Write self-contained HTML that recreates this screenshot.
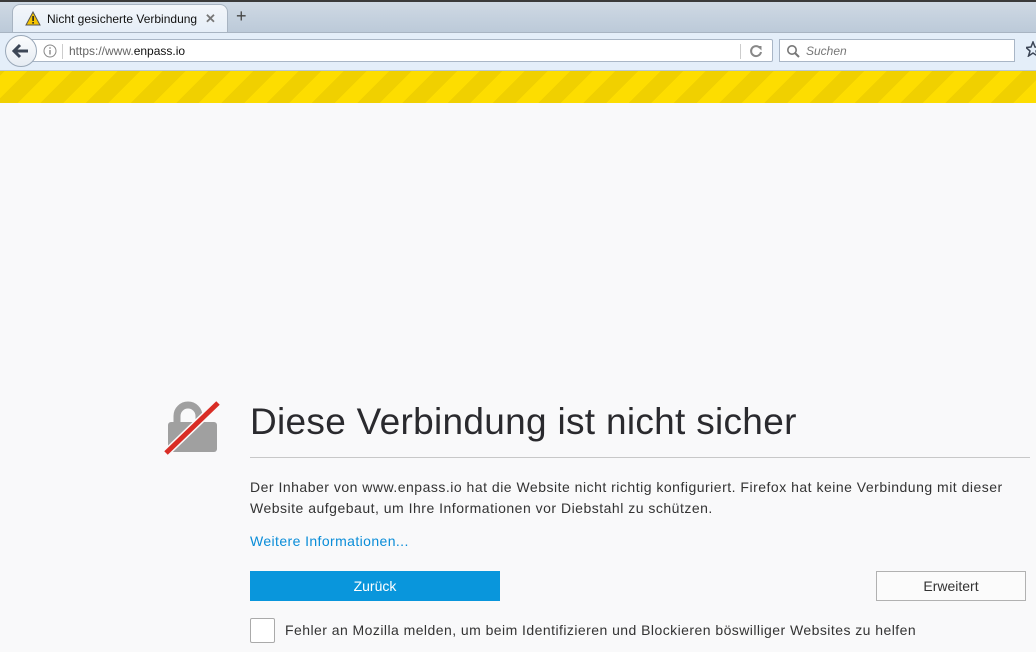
<!DOCTYPE html>
<html><head><style>
*{margin:0;padding:0;box-sizing:border-box}
body{width:1036px;height:652px;overflow:hidden;background:#f9f9fa;font-family:"Liberation Sans",sans-serif;position:relative}
.tabbar{position:absolute;left:0;top:0;width:1036px;height:32px;background:linear-gradient(#cfd9e4,#bccad9);border-top:2px solid #3a3a3a}
.tab{position:absolute;left:12px;top:2px;width:216px;height:30px;background:linear-gradient(#f3f6fa,#e4edf7);border:1px solid #a8b4c2;border-bottom:none;border-radius:8px 8px 0 0}
.tab span{position:absolute;left:34px;top:7px;font-size:12px;color:#111}
.tab .x{position:absolute;left:192px;top:6px;font-size:13px;color:#777;font-weight:bold}
.plus{position:absolute;left:236px;top:4px;font-size:18px;color:#444}
.nav{position:absolute;left:0;top:32px;width:1036px;height:39px;background:#e4eef9;border-top:1px solid #a8b4c2;border-bottom:1px solid #b8c6d6}
.url{position:absolute;left:30px;top:6px;width:743px;height:23px;background:#fff;border:1px solid #a9b6c6;border-radius:0 2px 2px 0}
.url span{position:absolute;left:38px;top:4px;font-size:12px;color:#666}
.back{position:absolute;left:5px;top:2px;width:32px;height:32px;border-radius:50%;background:linear-gradient(#fbfcfd,#e6ecf3);border:1px solid #9aa8b8}
.search{position:absolute;left:779px;top:6px;width:236px;height:23px;background:#fff;border:1px solid #a9b6c6}
.search span{position:absolute;left:26px;top:4px;font-size:12px;color:#777;font-style:italic}
.stripe{position:absolute;left:0;top:71px;width:1036px;height:32px;background:repeating-linear-gradient(-45deg,#fddd00 0 16px,#f0d000 16px 32px)}
h1{position:absolute;left:250px;top:401px;font-weight:normal;font-size:37px;color:#2a2a2e;letter-spacing:0.3px}
.hr{position:absolute;left:250px;top:457px;width:780px;height:1px;background:#c8c8c8}
p{position:absolute;left:250px;top:477px;width:760px;font-size:14px;line-height:21px;color:#333;letter-spacing:0.5px}
a{position:absolute;left:250px;top:533px;font-size:14px;color:#0a8dd8;letter-spacing:0.4px}
.b1{position:absolute;left:250px;top:571px;width:250px;height:30px;background:#0996dc;color:#fff;font-size:14px;text-align:center;line-height:30px}
.b2{position:absolute;left:876px;top:571px;width:150px;height:30px;background:#fbfbfb;border:1px solid #b1b1b1;color:#333;font-size:14px;text-align:center;line-height:28px}
.cb{position:absolute;left:250px;top:618px;width:25px;height:25px;border:1px solid #aaa;background:#fff;border-radius:2px}
.cbl{position:absolute;left:285px;top:622px;font-size:14px;color:#333;letter-spacing:0.45px}
</style></head><body>
<div class="tabbar">
<div class="tab">
<svg style="position:absolute;left:12px;top:6px" width="16" height="15"><path d="M8 1 L15 14 H1 Z" fill="#f5c400" stroke="#555" stroke-width="1"/><rect x="7.3" y="5" width="1.6" height="5" fill="#222"/><rect x="7.3" y="11" width="1.6" height="1.6" fill="#222"/></svg>
<span>Nicht gesicherte Verbindung</span><span class="x">✕</span></div>
<div class="plus">+</div>
</div>
<div class="nav">
<div class="url">
<svg style="position:absolute;left:12px;top:4px" width="14" height="14"><circle cx="7" cy="7" r="6" fill="none" stroke="#888"/><rect x="6.3" y="6" width="1.4" height="4.5" fill="#888"/><rect x="6.3" y="3.3" width="1.4" height="1.4" fill="#888"/></svg>
<div style="position:absolute;left:31px;top:4px;width:1px;height:15px;background:#ccc"></div>
<span>https://www.<span style="position:static;color:#111">enpass.io</span></span>
<div style="position:absolute;left:709px;top:4px;width:1px;height:15px;background:#ccc"></div>
<svg style="position:absolute;left:718px;top:4px" width="14" height="14"><path d="M11 4 A5 5 0 1 0 12 8" fill="none" stroke="#888" stroke-width="2"/><path d="M8 2 L12.5 2 L12.5 6.5 Z" fill="#888"/></svg>
</div>
<div class="back"><svg width="30" height="30"><path d="M8 15 H22 M14 9 L8 15 L14 21" stroke="#3c4656" stroke-width="3" fill="none"/></svg></div>
<div class="search"><svg style="position:absolute;left:6px;top:4px" width="14" height="14"><circle cx="6" cy="6" r="4.2" fill="none" stroke="#777" stroke-width="1.6"/><path d="M9 9 L13 13" stroke="#777" stroke-width="2"/></svg><span>Suchen</span></div>
<svg style="position:absolute;left:1026px;top:8px" width="14" height="16"><path d="M7 1 L9 6 L14 6.5 L10 10 L11.5 15 L7 12 L2.5 15 L4 10 L0 6.5 L5 6 Z" fill="none" stroke="#3c4656" stroke-width="1.5"/></svg>
</div>
<div class="stripe"></div>
<svg style="position:absolute;left:164px;top:400px" width="56" height="56"><path d="M13 22 V16 A11 11 0 0 1 35 16 V22" fill="none" stroke="#a0a0a0" stroke-width="7"/><rect x="4" y="22" width="49" height="30" rx="3" fill="#a0a0a0"/><path d="M2 53 L54 3" stroke="#f9f9fa" stroke-width="8"/><path d="M2 53 L54 3" stroke="#d92d25" stroke-width="5"/></svg>
<h1>Diese Verbindung ist nicht sicher</h1>
<div class="hr"></div>
<p>Der Inhaber von www.enpass.io hat die Website nicht richtig konfiguriert. Firefox hat keine Verbindung mit dieser Website aufgebaut, um Ihre Informationen vor Diebstahl zu schützen.</p>
<a>Weitere Informationen...</a>
<div class="b1">Zurück</div>
<div class="b2">Erweitert</div>
<div class="cb"></div>
<div class="cbl">Fehler an Mozilla melden, um beim Identifizieren und Blockieren böswilliger Websites zu helfen</div>
</body></html>
